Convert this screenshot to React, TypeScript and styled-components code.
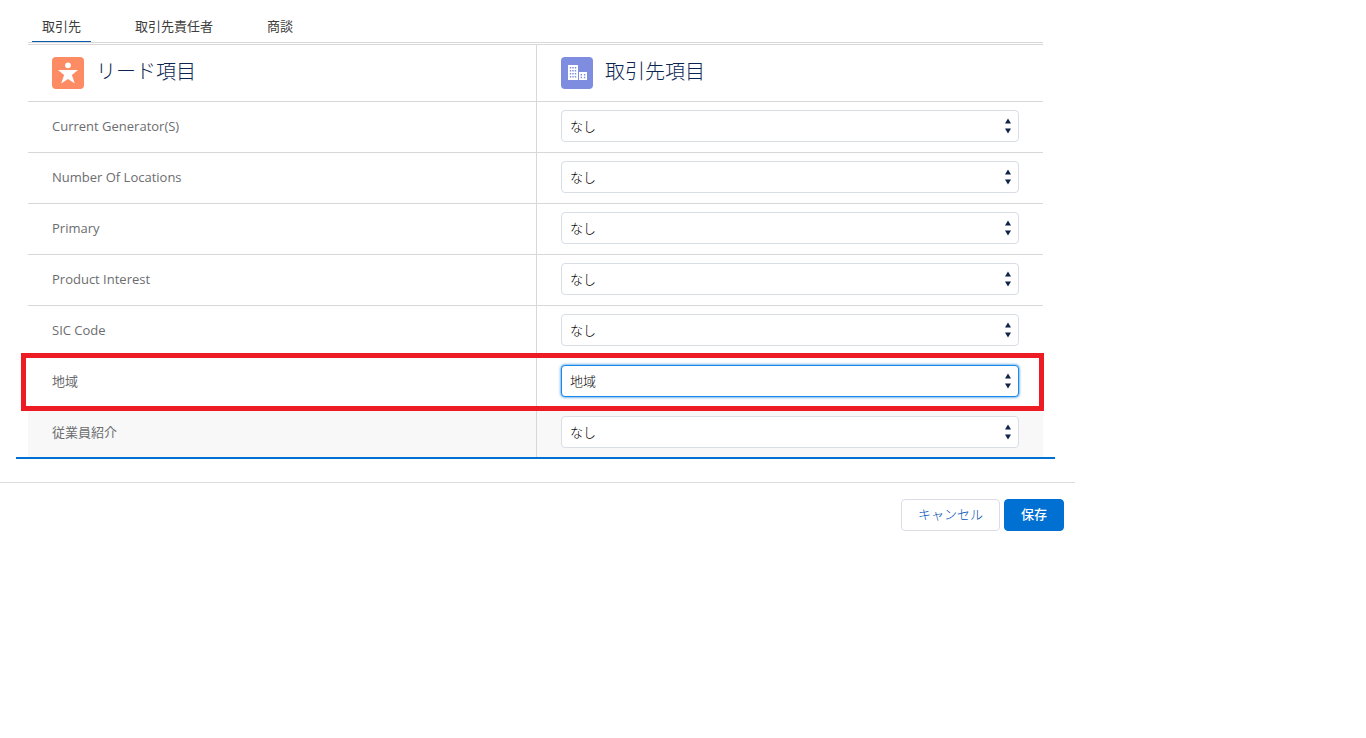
import React from 'react';
import styled, { createGlobalStyle } from 'styled-components';

const GlobalStyle = createGlobalStyle`
    html, body {
        margin: 0;
        padding: 0;
        background: #fff;
        font-family: 'Open Sans', 'Noto Sans CJK JP', sans-serif;
        color: #16325c;
    }
`;

const Page = styled.div`
    width: 1075px;
`;

const Content = styled.div`
    padding: 0 32px 0 28px;
`;

const Tabs = styled.div`
    display: flex;
    gap: 34px;
    height: 43px;
    padding-left: 4px;
    box-sizing: border-box;
    border-bottom: 1px solid #d8d8d8;
`;

const Tab = styled.div<{ $active?: boolean }>`
    padding: 16px 10px 0;
    height: 42px;
    box-sizing: border-box;
    font-size: 13px;
    line-height: 20px;
    color: #3e3e3c;
    border-bottom: ${(p) => (p.$active ? '1px solid #0b5cab' : 'none')};
`;

const Row = styled.div<{ $shaded?: boolean; $last?: boolean }>`
    position: relative;
    display: grid;
    grid-template-columns: 508px 1fr;
    height: ${(p) => (p.$last ? '49px' : '51px')};
    box-sizing: border-box;
    border-bottom: ${(p) => (p.$last ? 'none' : '1px solid #d8d8d8')};
    background: ${(p) => (p.$shaded ? '#f8f8f8' : 'transparent')};
`;

const HeadRow = styled(Row)`
    height: 58px;
    margin-top: 1px;
    border-top: 1px solid #d8d8d8;
`;

const Cell = styled.div<{ $pad?: number }>`
    display: flex;
    align-items: center;
    padding: 0 0 ${(p) => p.$pad ?? 2}px 24px;
    font-size: 13px;
    color: #6b6d70;
`;

const FieldCell = styled.div<{ $last?: boolean }>`
    display: flex;
    align-items: center;
    padding: 0 0 ${(p) => (p.$last ? '1px' : '2px')} 24px;
    border-left: 1px solid #d8d8d8;
`;

const HeadCell = styled(Cell)`
    gap: 12px;
    padding-bottom: 0;
`;

const HeadFieldCell = styled(FieldCell)`
    gap: 12px;
    padding-bottom: 0;
`;

const HeadTitle = styled.span`
    padding-bottom: 5px;
    font-size: 20px;
    font-weight: 300;
    color: #0a2550;
`;

const IconBox = styled.span<{ $bg: string }>`
    width: 32px;
    height: 32px;
    border-radius: 4px;
    background: ${(p) => p.$bg};
    display: flex;
    align-items: center;
    justify-content: center;
`;

const Select = styled.div<{ $focused?: boolean }>`
    position: relative;
    width: 458px;
    height: 32px;
    box-sizing: border-box;
    padding: 0 0 2px 8px;
    display: flex;
    align-items: center;
    font-size: 13px;
    font-weight: 300;
    color: #000;
    background: #fff;
    border-radius: 4px;
    border: 1px solid ${(p) => (p.$focused ? '#1589ee' : '#d8dde6')};
    box-shadow: ${(p) => (p.$focused ? '0 0 3px #0070d2' : 'none')};
`;

const Arrows = styled.svg`
    position: absolute;
    right: 7px;
    top: 7px;
`;

const Highlight = styled.div`
    position: absolute;
    z-index: 1;
    left: -7px;
    right: -1px;
    top: -4px;
    bottom: -4px;
    border: 5px solid #ed1c24;
    pointer-events: none;
`;

const TableEnd = styled.div`
    height: 2px;
    background: #0070d2;
    margin: 0 -12px 0 -12px;
`;

const Footer = styled.div`
    margin-top: 23px;
    border-top: 1px solid #dddbda;
    padding: 16px 11px 0 0;
    display: flex;
    justify-content: flex-end;
    gap: 4px;
`;

const CancelButton = styled.button`
    width: 99px;
    height: 32px;
    padding: 0 0 3px;
    font-family: inherit;
    font-size: 13px;
    font-weight: 300;
    color: #0050b5;
    background: #fff;
    border: 1px solid #dddbe6;
    border-radius: 4px;
`;

const SaveButton = styled(CancelButton)`
    width: 60px;
    font-weight: 500;
    color: #fff;
    background: #0070d2;
    border-color: #0070d2;
`;

const leadFields = ['Current Generator(S)', 'Number Of Locations', 'Primary', 'Product Interest', 'SIC Code'];

function SelectArrows() {
    return (
        <Arrows width="6" height="16" viewBox="0 0 6 16">
            <path d="M3 0.5 L6 5.5 H0 Z" fill="#0f2348" />
            <path d="M0 10.5 H6 L3 15.5 Z" fill="#0f2348" />
        </Arrows>
    );
}

function FieldSelect({ value, focused }: { value: string; focused?: boolean }) {
    return (
        <Select $focused={focused}>
            {value}
            <SelectArrows />
        </Select>
    );
}

function LeadIcon() {
    return (
        <svg width="24" height="24" viewBox="0 0 24 24">
            <circle cx="12" cy="4.3" r="2.9" fill="#fff" />
            <path d="M2 9 H22 L15.9 14 L18.8 22.4 L12 18 L5.2 22.4 L8.1 14 Z" fill="#fff" />
        </svg>
    );
}

function AccountIcon() {
    return (
        <svg width="24" height="24" viewBox="0 0 24 24">
            <path
                fill="#fff"
                fillRule="evenodd"
                d="M3 4 H13 V19 H3 Z M4.8 6 V7.4 H6.2 V6 Z M7.3 6 V7.4 H8.7 V6 Z M9.8 6 V7.4 H11.2 V6 Z M4.8 9 V10.4 H6.2 V9 Z M7.3 9 V10.4 H8.7 V9 Z M9.8 9 V10.4 H11.2 V9 Z M4.8 12 V13.4 H6.2 V12 Z M7.3 12 V13.4 H8.7 V12 Z M9.8 12 V13.4 H11.2 V12 Z M4.8 15 V16.4 H6.2 V15 Z M7.3 15 V16.4 H8.7 V15 Z M9.8 15 V16.4 H11.2 V15 Z"
            />
            <path
                fill="#fff"
                fillRule="evenodd"
                d="M14 11 H22 V19 H14 Z M15.6 13 V14.4 H17 V13 Z M18.9 13 V14.4 H20.3 V13 Z M15.6 15.8 V17.2 H17 V15.8 Z M18.9 15.8 V17.2 H20.3 V15.8 Z"
            />
        </svg>
    );
}

function App() {
    return (
        <Page>
            <GlobalStyle />
            <Content>
                <Tabs>
                    <Tab $active>取引先</Tab>
                    <Tab>取引先責任者</Tab>
                    <Tab>商談</Tab>
                </Tabs>
                <HeadRow>
                    <HeadCell>
                        <IconBox $bg="#fd8b63">
                            <LeadIcon />
                        </IconBox>
                        <HeadTitle>リード項目</HeadTitle>
                    </HeadCell>
                    <HeadFieldCell>
                        <IconBox $bg="#7f8de1">
                            <AccountIcon />
                        </IconBox>
                        <HeadTitle>取引先項目</HeadTitle>
                    </HeadFieldCell>
                </HeadRow>
                {leadFields.map((field) => (
                    <Row key={field}>
                        <Cell>{field}</Cell>
                        <FieldCell>
                            <FieldSelect value="なし" />
                        </FieldCell>
                    </Row>
                ))}
                <Row>
                    <Cell $pad={4}>地域</Cell>
                    <FieldCell>
                        <FieldSelect value="地域" focused />
                    </FieldCell>
                    <Highlight />
                </Row>
                <Row $shaded $last>
                    <Cell $pad={3}>従業員紹介</Cell>
                    <FieldCell $last>
                        <FieldSelect value="なし" />
                    </FieldCell>
                </Row>
                <TableEnd />
            </Content>
            <Footer>
                <CancelButton>キャンセル</CancelButton>
                <SaveButton>保存</SaveButton>
            </Footer>
        </Page>
    );
}

export default App;
